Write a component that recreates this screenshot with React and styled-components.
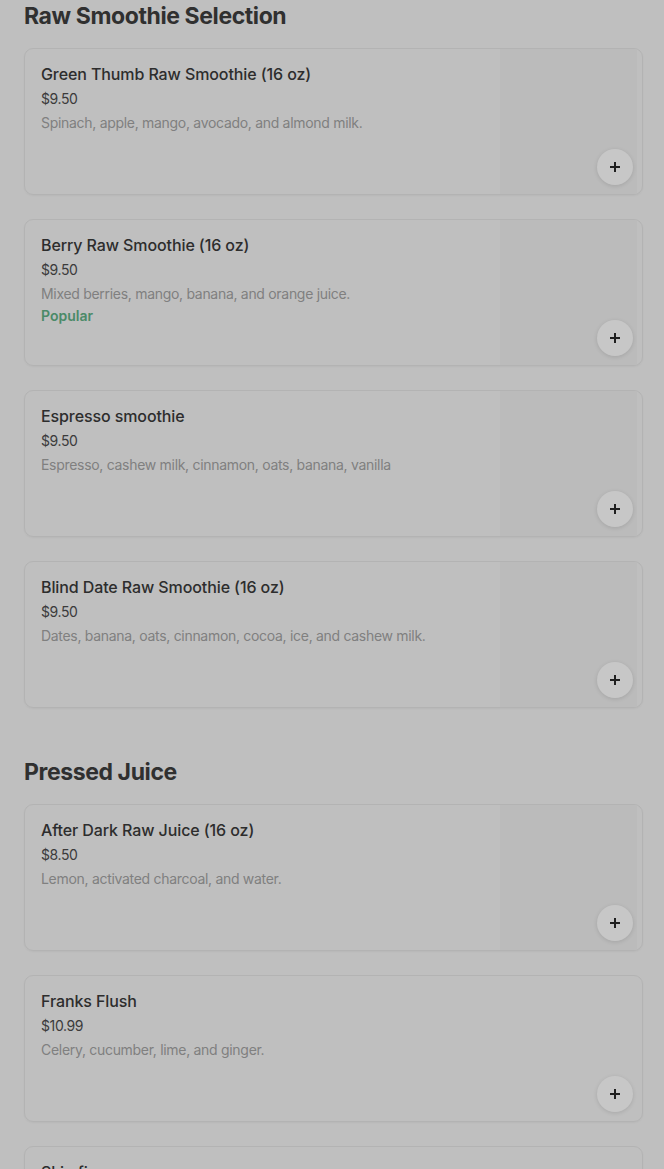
import styled, { createGlobalStyle } from "styled-components";

const sections = [
  {
    title: "Raw Smoothie Selection",
    items: [
      { name: "Green Thumb Raw Smoothie (16 oz)", price: "$9.50", desc: "Spinach, apple, mango, avocado, and almond milk." },
      { name: "Berry Raw Smoothie (16 oz)", price: "$9.50", desc: "Mixed berries, mango, banana, and orange juice.", popular: true },
      { name: "Espresso smoothie", price: "$9.50", desc: "Espresso, cashew milk, cinnamon, oats, banana, vanilla" },
      { name: "Blind Date Raw Smoothie (16 oz)", price: "$9.50", desc: "Dates, banana, oats, cinnamon, cocoa, ice, and cashew milk." },
    ],
  },
  {
    title: "Pressed Juice",
    items: [
      { name: "After Dark Raw Juice (16 oz)", price: "$8.50", desc: "Lemon, activated charcoal, and water.", image: true },
      { name: "Franks Flush", price: "$10.99", desc: "Celery, cucumber, lime, and ginger.", image: false },
      { name: "Skin fix", price: "$10.99", desc: "", image: false },
    ],
  },
];

const App = () => {
  return (
    <Page>
      <GlobalStyle />
      {sections.map((s) => (
        <Section key={s.title}>
          <SectionTitle>{s.title}</SectionTitle>
          <CardList>
            {s.items.map((item) => (
              <Card key={item.name}>
                <Info>
                  <ItemName>{item.name}</ItemName>
                  <Price>{item.price}</Price>
                  <Desc>{item.desc}</Desc>
                  {item.popular && <Popular>Popular</Popular>}
                </Info>
                {item.image !== false && <ImageArea />}
                <AddButton aria-label="Add">
                  <svg width="12" height="12" viewBox="0 0 12 12">
                    <path d="M6 1v10M1 6h10" stroke="#1f1f1f" strokeWidth="2" />
                  </svg>
                </AddButton>
              </Card>
            ))}
          </CardList>
        </Section>
      ))}
    </Page>
  );
};

export default App;

const GlobalStyle = createGlobalStyle`
html, body {
  margin: 0;
  background: #bfbfbf;
  overflow: hidden;
}
body {
  font-family: Inter, "Noto Sans", sans-serif;
}
`

const Page = styled.div`
padding: 0 21px 0 24px;
display: flex;
flex-direction: column;
gap: 48px;
`
const Section = styled.section`
display: flex;
flex-direction: column;
`
const SectionTitle = styled.h2`
margin: 0 0 16px;
font-size: 23px;
line-height: 32px;
font-weight: 700;
letter-spacing: -0.4px;
color: #303030;
`
const CardList = styled.div`
display: flex;
flex-direction: column;
gap: 24px;
`
const Card = styled.div`
position: relative;
display: flex;
height: 147px;
box-sizing: border-box;
border: 1px solid #b3b3b3;
border-radius: 9px;
overflow: hidden;
box-shadow: 0 1px 2px rgba(0,0,0,0.04);
`
const Info = styled.div`
flex: 1;
padding: 15px 16px;
`
const ItemName = styled.div`
font-size: 16px;
line-height: 20px;
font-weight: 500;
color: #2d2d2d;
letter-spacing: -0.1px;
`
const Price = styled.div`
margin-top: 5px;
font-size: 14px;
line-height: 20px;
color: #3b3b3b;
letter-spacing: -0.4px;
`
const Desc = styled.div`
margin-top: 4px;
font-size: 14px;
line-height: 20px;
color: #808080;
letter-spacing: -0.3px;
`
const Popular = styled.div`
margin-top: 2px;
font-size: 14px;
line-height: 20px;
font-weight: 600;
color: #4b8a68;
`
const ImageArea = styled.div`
width: 137px;
margin-right: 5px;
background: #bbbbbb;
`
const AddButton = styled.button`
position: absolute;
right: 9px;
bottom: 9px;
width: 36px;
height: 36px;
border-radius: 50%;
border: none;
padding: 0;
background: #c7c7c7;
box-shadow: 0 1px 4px rgba(0,0,0,0.12);
display: flex;
align-items: center;
justify-content: center;
`
